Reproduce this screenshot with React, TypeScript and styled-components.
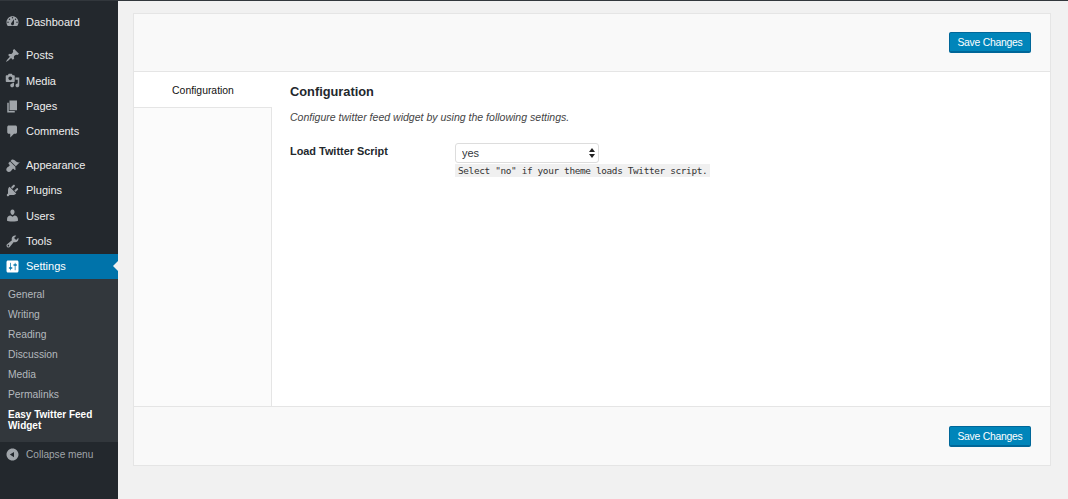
import React from 'react';
import styled, { createGlobalStyle } from 'styled-components';

const GlobalStyle = createGlobalStyle`
  html, body {
    margin: 0;
    padding: 0;
    background: #f1f1f1;
  }
  body {
    font-family: 'Liberation Sans', Arial, sans-serif;
    color: #23282d;
  }
`;

const Page = styled.div`
  display: flex;
  width: 1068px;
  height: 499px;
  overflow: hidden;
  border-top: 1px solid #32373c;
  box-sizing: border-box;
`;

const Sidebar = styled.nav`
  display: flex;
  flex-direction: column;
  flex: 0 0 118px;
  padding-top: 8px;
  background: #23282d;
`;

const MenuGroup = styled.div`
  margin-bottom: ${(props: { $gap: number }) => props.$gap}px;
`;

const MenuItem = styled.div<{ $current?: boolean }>`
  position: relative;
  display: flex;
  align-items: center;
  gap: 6px;
  height: 25.3px;
  padding-left: 5px;
  font-size: 11px;
  color: ${(props) => (props.$current ? '#fff' : '#eee')};
  background: ${(props) => (props.$current ? '#0073aa' : 'transparent')};

  svg {
    flex: 0 0 15px;
    fill: ${(props) => (props.$current ? '#fff' : '#a0a5aa')};
  }
`;

const CurrentArrow = styled.span`
  position: absolute;
  top: 7px;
  right: 0;
  border: 5.5px solid transparent;
  border-left-width: 0;
  border-right-color: #f1f1f1;
`;

const SubMenu = styled.div`
  padding: 6px 0 7px;
  background: #32373c;
`;

const SubItem = styled.div<{ $current?: boolean }>`
  padding: 4px 8px;
  font-size: ${(props) => (props.$current ? '10px' : '10.3px')};
  line-height: ${(props) => (props.$current ? '11px' : '12px')};
  font-weight: ${(props) => (props.$current ? 700 : 400)};
  color: ${(props) => (props.$current ? '#fff' : '#b4b9be')};
`;

const Collapse = styled(MenuItem)`
  font-size: 10.1px;
  color: #a0a5aa;
`;

const Main = styled.main`
  flex: 1;
  padding: 12px 17px 0 15px;
`;

const Panel = styled.section`
  display: flex;
  flex-direction: column;
  height: 453px;
  box-sizing: border-box;
  border: 1px solid #e5e5e5;
  background: #fff;
`;

const ActionBar = styled.div<{ $bottom?: boolean }>`
  display: flex;
  flex: 0 0 ${(props) => (props.$bottom ? '59px' : '58px')};
  align-items: center;
  justify-content: flex-end;
  box-sizing: border-box;
  padding-right: 19px;
  padding-top: ${(props) => (props.$bottom ? '1px' : '0')};
  background: #f9f9f9;
  border-${(props) => (props.$bottom ? 'top' : 'bottom')}: 1px solid #e5e5e5;
`;

const SaveButton = styled.button`
  width: 82px;
  height: 21px;
  padding: 1px 0 0;
  box-sizing: border-box;
  border: 1px solid #006799;
  border-bottom-width: 2px;
  border-radius: 2px;
  background: #0085ba;
  color: #fff;
  font-family: inherit;
  font-size: 10.4px;
  letter-spacing: -0.25px;
  line-height: 16px;
`;

const Body = styled.div`
  display: flex;
  flex: 1;
  min-height: 0;
`;

const TabColumn = styled.div`
  display: flex;
  flex-direction: column;
  flex: 0 0 138px;
  box-sizing: border-box;
  background: #fbfbfb;
  border-right: 1px solid #e5e5e5;
`;

const Tab = styled.div`
  height: 36px;
  margin-right: -1px;
  padding-top: 12px;
  box-sizing: border-box;
  background: #fff;
  border-bottom: 1px solid #e5e5e5;
  text-align: center;
  font-size: 10.4px;
  line-height: 13px;
  color: #111;
`;

const Content = styled.div`
  flex: 1;
  padding: 12px 18px;
`;

const Heading = styled.h2`
  margin: 0;
  font-size: 12.8px;
  line-height: 15px;
  font-weight: 700;
  color: #23282d;
`;

const Description = styled.p`
  margin: 12px 0 0;
  font-size: 10.54px;
  line-height: 13px;
  font-style: italic;
  color: #444;
`;

const Row = styled.div`
  display: grid;
  grid-template-columns: 165px auto;
  justify-content: start;
  margin-top: 19px;
`;

const Label = styled.label`
  padding-top: 2px;
  font-size: 10.9px;
  line-height: 13px;
  font-weight: 700;
  color: #23282d;
`;

const Field = styled.div`
  display: flex;
  flex-direction: column;
  align-items: flex-start;
`;

const SelectBox = styled.div`
  position: relative;
  width: 144px;
  height: 20px;
`;

const Select = styled.select`
  display: block;
  width: 100%;
  height: 100%;
  padding: 0 6px;
  box-sizing: border-box;
  appearance: none;
  border: 1px solid #ddd;
  border-radius: 3px;
  background: #fff;
  font-family: inherit;
  font-size: 11px;
  color: #32373c;
`;

const SelectArrows = styled.svg`
  position: absolute;
  top: 5px;
  right: 3px;
  fill: #222;
  pointer-events: none;
`;

const Hint = styled.code`
  margin-top: 1px;
  padding: 0 3px;
  background: #f0f0f0;
  font-family: 'DejaVu Sans Mono', 'Liberation Mono', monospace;
  font-size: 9.4px;
  letter-spacing: -0.34px;
  line-height: 13px;
  white-space: pre;
  color: #333;
`;

const icons = {
  dashboard:
    'M3.76 16h12.48c1.1-1.37 1.76-3.11 1.76-5 0-4.42-3.58-8-8-8s-8 3.58-8 8c0 1.89.66 3.63 1.76 5zM10 4c.55 0 1 .45 1 1s-.45 1-1 1-1-.45-1-1 .45-1 1-1zM6 6c.55 0 1 .45 1 1s-.45 1-1 1-1-.45-1-1 .45-1 1-1zm8 0c.55 0 1 .45 1 1s-.45 1-1 1-1-.45-1-1 .45-1 1-1zm-5.37 5.55L12 7v6c0 1.1-.9 2-2 2s-2-.9-2-2c0-.57.24-1.08.63-1.45zM4 10c.55 0 1 .45 1 1s-.45 1-1 1-1-.45-1-1 .45-1 1-1zm12 0c.55 0 1 .45 1 1s-.45 1-1 1-1-.45-1-1 .45-1 1-1z',
  posts:
    'M10.44 3.02l1.82-1.82 6.36 6.35-1.83 1.82c-1.05-.68-2.48-.57-3.41.36l-.75.75c-.92.93-1.04 2.35-.35 3.41l-1.83 1.82-2.41-2.41-2.8 2.79c-.42.42-3.38 2.71-3.8 2.29s1.86-3.39 2.28-3.81l2.79-2.79L4.1 9.36l1.83-1.82c1.05.69 2.48.57 3.4-.36l.75-.75c.93-.92 1.05-2.35.36-3.41z',
  media:
    'M13 11V4c0-.55-.45-1-1-1h-1.67L9 1H5L3.67 3H2c-.55 0-1 .45-1 1v7c0 .55.45 1 1 1h10c.55 0 1-.45 1-1zM7 4.5c1.38 0 2.5 1.12 2.5 2.5S8.38 9.5 7 9.5 4.5 8.38 4.5 7 5.62 4.5 7 4.5zM14 6h5v10.5c0 1.38-1.12 2.5-2.5 2.5S14 17.88 14 16.5s1.12-2.5 2.5-2.5c.17 0 .34.02.5.05V9h-3V6zm-4 8.05V13h2v3.5c0 1.38-1.12 2.5-2.5 2.5S7 17.88 7 16.5 8.12 14 9.5 14c.17 0 .34.02.5.05z',
  pages: 'M6 15V2h10v13H6zm-1 1h8v2H3V5h2v11z',
  comments:
    'M5 2h9c1.1 0 2 .9 2 2v7c0 1.1-.9 2-2 2h-2l-5 5v-5H5c-1.1 0-2-.9-2-2V4c0-1.1.9-2 2-2z',
  appearance:
    'M14.48 11.06L7.41 3.99l1.5-1.5c.5-.56 2.3-.47 3.51.32 1.21.8 1.43 1.28 2.91 2.1 1.18.64 2.45 1.26 4.45.85zm-.71.71L6.7 4.7 4.93 6.47c-.39.39-.39 1.02 0 1.41l1.06 1.06c.39.39.39 1.03 0 1.42-.6.6-1.43 1.11-2.21 1.69-.35.26-.7.53-1.01.84-1.34 1.34-1.34 3.52 0 4.86s3.52 1.34 4.86 0c.31-.31.58-.66.84-1.01.58-.78 1.09-1.61 1.69-2.21.39-.39 1.03-.39 1.42 0l1.06 1.06c.39.39 1.02.39 1.41 0z',
  plugins:
    'M13.11 4.36L9.87 7.6 8 5.73l3.24-3.24c.35-.34 1.05-.2 1.56.32.52.51.66 1.21.31 1.55zm-8 1.77l.91-1.12 9.01 9.01-1.19.84c-.71.71-2.63 1.16-3.82 1.16H6.14L4.9 17.26c-.59.59-1.54.59-2.12 0-.59-.58-.59-1.53 0-2.12l1.24-1.24v-3.88c0-1.13.4-3.19 1.09-3.89zm7.26 3.97l3.24-3.24c.34-.35 1.04-.21 1.55.31.52.51.66 1.21.31 1.55l-3.24 3.25z',
  users:
    'M10 9.25c-2.27 0-2.73-3.44-2.73-3.44C7 4.02 7.82 2 9.97 2c2.16 0 2.98 2.02 2.71 3.81 0 0-.41 3.44-2.68 3.44zm0 2.57L12.72 10c2.39 0 4.52 2.33 4.52 4.53v2.49s-3.65 1.13-7.24 1.13c-3.65 0-7.24-1.13-7.24-1.13v-2.49c0-2.25 1.94-4.48 4.47-4.48z',
  tools:
    'M16.68 9.77c-1.34 1.34-3.3 1.67-4.95.99l-5.41 6.52c-.99.99-2.59.99-3.58 0s-.99-2.59 0-3.57l6.52-5.42c-.68-1.65-.35-3.61.99-4.95 1.28-1.28 3.12-1.62 4.72-1.06l-2.89 2.89 2.82 2.82 2.86-2.87c.53 1.58.18 3.39-1.08 4.65zM3.81 16.21c.4.39 1.04.39 1.43 0 .4-.4.4-1.04 0-1.43-.39-.4-1.03-.4-1.43 0-.39.39-.39 1.03 0 1.43z',
  settings:
    'M18 16V4c0-1.1-.9-2-2-2H4c-1.1 0-2 .9-2 2v12c0 1.1.9 2 2 2h12c1.1 0 2-.9 2-2zM8 11h1c.55 0 1 .45 1 1s-.45 1-1 1H8v1.5c0 .28-.22.5-.5.5s-.5-.22-.5-.5V13H6c-.55 0-1-.45-1-1s.45-1 1-1h1V5.5c0-.28.22-.5.5-.5s.5.22.5.5V11zm5-2h-1c-.55 0-1-.45-1-1s.45-1 1-1h1V5.5c0-.28.22-.5.5-.5s.5.22.5.5V7h1c.55 0 1 .45 1 1s-.45 1-1 1h-1v5.5c0 .28-.22.5-.5.5s-.5-.22-.5-.5V9z',
  collapse:
    'M10 2c-4.42 0-8 3.58-8 8s3.58 8 8 8 8-3.58 8-8-3.58-8-8-8zm2 4.5v7L6.5 10z',
};

type IconName = keyof typeof icons;

function Icon({ name }: { name: IconName }) {
  return (
    <svg width="15" height="15" viewBox="0 0 20 20">
      <path fillRule="evenodd" d={icons[name]} />
    </svg>
  );
}

const firstGroup: [IconName, string][] = [
  ['posts', 'Posts'],
  ['media', 'Media'],
  ['pages', 'Pages'],
  ['comments', 'Comments'],
];

const secondGroup: [IconName, string][] = [
  ['appearance', 'Appearance'],
  ['plugins', 'Plugins'],
  ['users', 'Users'],
  ['tools', 'Tools'],
];

const subItems = ['General', 'Writing', 'Reading', 'Discussion', 'Media', 'Permalinks'];

export default function App() {
  return (
    <>
      <GlobalStyle />
      <Page>
        <Sidebar>
          <MenuGroup $gap={8.5}>
            <MenuItem>
              <Icon name="dashboard" />
              Dashboard
            </MenuItem>
          </MenuGroup>
          <MenuGroup $gap={8.5}>
            {firstGroup.map(([icon, label]) => (
              <MenuItem key={label}>
                <Icon name={icon} />
                {label}
              </MenuItem>
            ))}
          </MenuGroup>
          <MenuGroup $gap={0}>
            {secondGroup.map(([icon, label]) => (
              <MenuItem key={label}>
                <Icon name={icon} />
                {label}
              </MenuItem>
            ))}
            <MenuItem $current>
              <Icon name="settings" />
              Settings
              <CurrentArrow />
            </MenuItem>
          </MenuGroup>
          <SubMenu>
            {subItems.map((label) => (
              <SubItem key={label}>{label}</SubItem>
            ))}
            <SubItem $current>Easy Twitter Feed Widget</SubItem>
          </SubMenu>
          <Collapse>
            <Icon name="collapse" />
            Collapse menu
          </Collapse>
        </Sidebar>
        <Main>
          <Panel>
            <ActionBar>
              <SaveButton type="button">Save Changes</SaveButton>
            </ActionBar>
            <Body>
              <TabColumn>
                <Tab>Configuration</Tab>
              </TabColumn>
              <Content>
                <Heading>Configuration</Heading>
                <Description>Configure twitter feed widget by using the following settings.</Description>
                <Row>
                  <Label>Load Twitter Script</Label>
                  <Field>
                    <SelectBox>
                      <Select defaultValue="yes">
                        <option value="yes">yes</option>
                        <option value="no">no</option>
                      </Select>
                      <SelectArrows width="8" height="10" viewBox="0 0 8 10">
                        <path d="M4 0l3 4H1zM4 10L1 6h6z" />
                      </SelectArrows>
                    </SelectBox>
                    <Hint>Select "no" if your theme loads Twitter script.</Hint>
                  </Field>
                </Row>
              </Content>
            </Body>
            <ActionBar $bottom>
              <SaveButton type="button">Save Changes</SaveButton>
            </ActionBar>
          </Panel>
        </Main>
      </Page>
    </>
  );
}
